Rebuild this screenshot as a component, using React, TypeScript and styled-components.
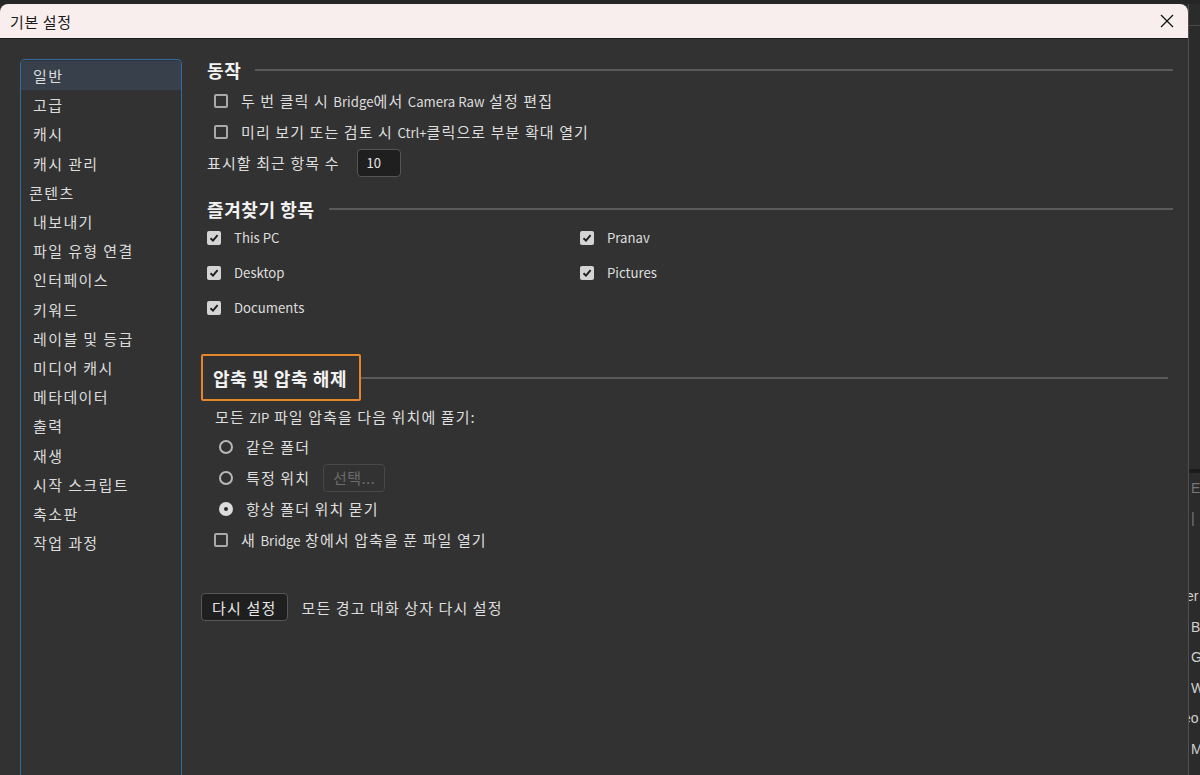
import React from "react";
import styled, { createGlobalStyle } from "styled-components";

const FONT = `"Noto Sans CJK KR", "Noto Sans", sans-serif`;

const Global = createGlobalStyle`
  html, body { margin: 0; padding: 0; background: #2a2a2a; }
  * { box-sizing: border-box; }
`;

const Desktop = styled.div`
  width: 1200px;
  height: 775px;
  overflow: hidden;
  display: flex;
  flex-direction: column;
  background: #2a2a2a;
  font-family: ${FONT};
`;

const TopStrip = styled.div`
  height: 4px;
  flex: none;
  background: #262626;
`;

const Main = styled.div`
  flex: 1;
  display: flex;
  min-height: 0;
`;

const Dialog = styled.div`
  width: 1188px;
  display: flex;
  flex-direction: column;
  border-radius: 8px 8px 0 0;
  overflow: hidden;
`;

const TitleBar = styled.div`
  height: 35px;
  flex: none;
  display: flex;
  align-items: center;
  justify-content: space-between;
  padding: 0 13px 0 10px;
  background: #f9eeee;
  border-bottom: 1px solid #1c1c1c;
`;

const Title = styled.span`
  font-size: 15px;
  color: #1b1b1b;
  letter-spacing: 0.6px;
`;

const Close = styled.button`
  width: 16px;
  height: 16px;
  padding: 0;
  border: 0;
  background: none;
  display: flex;
  align-items: center;
  justify-content: center;
`;

const Body = styled.div`
  flex: 1;
  display: flex;
  background: #323232;
  padding: 20px 0 0 20px;
  min-height: 0;
`;

const Sidebar = styled.nav`
  width: 162px;
  flex: none;
  border: 1px solid #2f6ba4;
  border-bottom: none;
  border-radius: 5px 5px 0 0;
  padding-top: 1px;
  display: flex;
  flex-direction: column;
`;

const NavItem = styled.div<{ $active?: boolean; $outdent?: boolean }>`
  height: 29.2px;
  flex: none;
  display: flex;
  align-items: center;
  padding-left: ${(p) => (p.$outdent ? "8px" : "12px")};
  font-size: 15px;
  letter-spacing: 1.4px;
  color: #dcdcdc;
  background: ${(p) => (p.$active ? "#37404b" : "transparent")};
`;

const Content = styled.div`
  flex: 1;
  padding: 0 15px 0 25px;
  display: flex;
  flex-direction: column;
  color: #dedede;
  font-size: 15px;
`;

const En = styled.span`
  font-size: 13.2px;
  letter-spacing: 0;
`;

const HeadingRow = styled.div<{ $mt?: number; $h?: number }>`
  display: flex;
  align-items: center;
  height: ${(p) => p.$h ?? 22}px;
  flex: none;
  margin-top: ${(p) => p.$mt ?? 0}px;
`;

const Heading = styled.h2`
  margin: 0 14px 0 0;
  font-size: 18px;
  font-weight: 700;
  color: #f2f2f2;
  letter-spacing: 0.6px;
  line-height: 22px;
  white-space: nowrap;
`;

const FocusHeading = styled.div`
  height: 47px;
  margin-left: -6px;
  padding: 0 12px 0 10px;
  border: 2px solid #e3862c;
  border-radius: 2px;
  display: flex;
  align-items: center;
  font-size: 18px;
  font-weight: 700;
  color: #f2f2f2;
  letter-spacing: 0.6px;
  white-space: nowrap;
`;

const Rule = styled.div<{ $mr?: number }>`
  flex: 1;
  height: 2px;
  background: #5a5a5a;
  margin-right: ${(p) => p.$mr ?? 0}px;
`;

const Row = styled.div<{ $h?: number; $indent?: number; $gap?: number }>`
  height: ${(p) => p.$h ?? 31}px;
  flex: none;
  display: flex;
  align-items: center;
  padding-left: ${(p) => p.$indent ?? 0}px;
  gap: ${(p) => p.$gap ?? 13}px;
  white-space: nowrap;
  letter-spacing: 1.1px;
`;

const Label = styled.span``;

const Box = styled.span<{ $checked?: boolean }>`
  width: 14px;
  height: 14px;
  flex: none;
  border-radius: 2px;
  border: 2px solid ${(p) => (p.$checked ? "#d4d4d4" : "#a9a9a9")};
  background: ${(p) => (p.$checked ? "#d4d4d4" : "transparent")};
  display: flex;
  align-items: center;
  justify-content: center;
`;

const Radio = styled.span<{ $on?: boolean }>`
  width: 14px;
  height: 14px;
  flex: none;
  border-radius: 50%;
  border: 2.5px solid ${(p) => (p.$on ? "#dcdcdc" : "#b8b8b8")};
  background: ${(p) => (p.$on ? "#dcdcdc" : "transparent")};
  display: flex;
  align-items: center;
  justify-content: center;
  &::after {
    content: "";
    width: 4px;
    height: 4px;
    border-radius: 50%;
    background: ${(p) => (p.$on ? "#2a2a2a" : "transparent")};
  }
`;

const NumberField = styled.div`
  width: 44px;
  height: 28px;
  margin-left: 4px;
  border: 1px solid #555;
  border-radius: 4px;
  background: #1f1f1f;
  display: flex;
  align-items: center;
  padding-left: 9px;
  font-size: 13px;
  letter-spacing: 0;
  color: #e6e6e6;
`;

const FavGrid = styled.div`
  display: grid;
  grid-template-columns: 373px 1fr;
  grid-auto-rows: 35px;
`;

const Button = styled.button<{ $disabled?: boolean }>`
  height: 28px;
  padding: 0 ${(p) => (p.$disabled ? "9px" : "10px")};
  border-radius: 4px;
  border: 1px solid ${(p) => (p.$disabled ? "#474747" : "#565656")};
  background: ${(p) => (p.$disabled ? "transparent" : "#1f1f1f")};
  color: ${(p) => (p.$disabled ? "#6c6c6c" : "#e6e6e6")};
  font-family: ${FONT};
  font-size: 15px;
  letter-spacing: ${(p) => (p.$disabled ? "0.4px" : "1.2px")};
  display: flex;
  align-items: center;
`;

const BgApp = styled.div`
  flex: 1;
  border-left: 1px solid #505050;
  background: #2b2b2b;
  display: flex;
  flex-direction: column;
  overflow: hidden;
  color: #d0d0d0;
  font-family: "Liberation Sans", sans-serif;
  font-size: 14px;
`;

const BgTop = styled.div`
  height: 22px;
  border-bottom: 1px solid #4a4a4a;
  flex: none;
`;

const BgSpacer = styled.div<{ $h: number; $dark?: boolean }>`
  height: ${(p) => p.$h}px;
  flex: none;
  background: ${(p) => (p.$dark ? "#1b1b1b" : "transparent")};
`;

const BgLine = styled.div<{ $dim?: boolean; $shift?: number }>`
  height: 30.5px;
  flex: none;
  display: flex;
  align-items: center;
  white-space: nowrap;
  margin-left: ${(p) => p.$shift ?? 2}px;
  color: ${(p) => (p.$dim ? "#777" : "#d0d0d0")};
`;

const CheckMark = () => (
  <svg width="10" height="10" viewBox="0 0 10 10">
    <path d="M1.5 5.2 L4 7.6 L8.6 2.2" fill="none" stroke="#1e1e1e" strokeWidth="1.9" />
  </svg>
);

const CloseIcon = () => (
  <svg width="14" height="14" viewBox="0 0 14 14">
    <path d="M1 1 L13 13 M13 1 L1 13" stroke="#111" strokeWidth="1.3" />
  </svg>
);

const navItems = [
  "일반",
  "고급",
  "캐시",
  "캐시 관리",
  "콘텐츠",
  "내보내기",
  "파일 유형 연결",
  "인터페이스",
  "키워드",
  "레이블 및 등급",
  "미디어 캐시",
  "메타데이터",
  "출력",
  "재생",
  "시작 스크립트",
  "축소판",
  "작업 과정",
];

const favs = ["This PC", "Pranav", "Desktop", "Pictures", "Documents"];

export default function App() {
  return (
    <>
      <Global />
      <Desktop>
        <TopStrip />
        <Main>
          <Dialog>
            <TitleBar>
              <Title>기본 설정</Title>
              <Close aria-label="닫기">
                <CloseIcon />
              </Close>
            </TitleBar>
            <Body>
              <Sidebar>
                {navItems.map((n, i) => (
                  <NavItem key={n} $active={i === 0} $outdent={n === "콘텐츠"}>
                    {n}
                  </NavItem>
                ))}
              </Sidebar>
              <Content>
                <HeadingRow>
                  <Heading>동작</Heading>
                  <Rule />
                </HeadingRow>
                <Row $indent={7} style={{ marginTop: 4 }}>
                  <Box />
                  <Label>
                    두 번 클릭 시 <En>Bridge</En>에서 <En>Camera Raw</En> 설정 편집
                  </Label>
                </Row>
                <Row $indent={7}>
                  <Box />
                  <Label>
                    미리 보기 또는 검토 시 <En>Ctrl+</En>클릭으로 부분 확대 열기
                  </Label>
                </Row>
                <Row>
                  <Label>표시할 최근 항목 수</Label>
                  <NumberField>10</NumberField>
                </Row>

                <HeadingRow $mt={20}>
                  <Heading>즐겨찾기 항목</Heading>
                  <Rule />
                </HeadingRow>
                <FavGrid>
                  {favs.map((f) => (
                    <Row key={f} $h={35}>
                      <Box $checked>
                        <CheckMark />
                      </Box>
                      <En>{f}</En>
                    </Row>
                  ))}
                </FavGrid>

                <HeadingRow $mt={29} $h={47}>
                  <FocusHeading>압축 및 압축 해제</FocusHeading>
                  <Rule $mr={5} />
                </HeadingRow>
                <Row $h={30} $indent={8}>
                  <Label>
                    모든 <En>ZIP</En> 파일 압축을 다음 위치에 풀기:
                  </Label>
                </Row>
                <Row $indent={12}>
                  <Radio />
                  <Label>같은 폴더</Label>
                </Row>
                <Row $indent={12}>
                  <Radio />
                  <Label>특정 위치</Label>
                  <Button $disabled disabled>
                    선택...
                  </Button>
                </Row>
                <Row $indent={12}>
                  <Radio $on />
                  <Label>항상 폴더 위치 묻기</Label>
                </Row>
                <Row $indent={7}>
                  <Box />
                  <Label>
                    새 <En>Bridge</En> 창에서 압축을 푼 파일 열기
                  </Label>
                </Row>
                <Row $h={28} $gap={14} style={{ marginTop: 38, marginLeft: -6 }}>
                  <Button>다시 설정</Button>
                  <Label>모든 경고 대화 상자 다시 설정</Label>
                </Row>
              </Content>
            </Body>
          </Dialog>
          <BgApp>
            <BgTop />
            <BgSpacer $h={443} />
            <BgSpacer $h={4} $dark />
            <BgLine $dim>E</BgLine>
            <BgLine $dim>| 우</BgLine>
            <BgSpacer $h={47} />
            <BgLine $shift={-10}>ver</BgLine>
            <BgLine>B</BgLine>
            <BgLine>G</BgLine>
            <BgLine>W</BgLine>
            <BgLine $shift={-6}>eo</BgLine>
            <BgLine>M</BgLine>
          </BgApp>
        </Main>
      </Desktop>
    </>
  );
}
